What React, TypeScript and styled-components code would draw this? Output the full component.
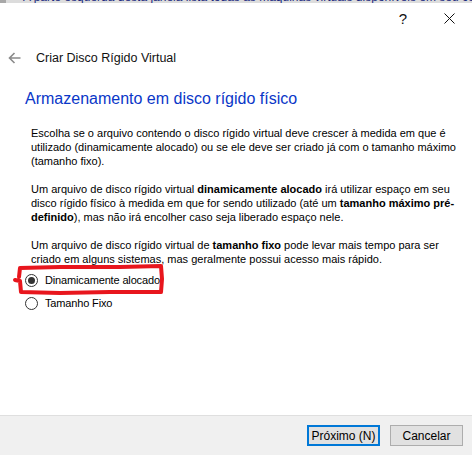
import React from "react";
import styled, { createGlobalStyle } from "styled-components";

const Global = createGlobalStyle`
  html, body { margin: 0; padding: 0; background: #ffffff; }
  body { width: 472px; height: 455px; overflow: hidden; }
  * { box-sizing: border-box; }
`;

const Window = styled.div`
  position: relative;
  width: 472px;
  height: 455px;
  display: flex;
  flex-direction: column;
  background: #ffffff;
  font-family: "Liberation Sans", Arial, sans-serif;
  color: #000000;
  overflow: hidden;
`;

const BackStrip = styled.div`
  height: 3px;
  background: #dcdcdc;
  display: flex;
  overflow: hidden;
  border-left: 6px solid #a8a8a8;
`;

const BackText = styled.div`
  margin-left: 17px;
  margin-top: -9px;
  font-size: 12px;
  line-height: 12px;
  color: #1b2a80;
  white-space: nowrap;
`;

const TitleBar = styled.div`
  height: 30px;
  display: flex;
  justify-content: flex-end;
  align-items: center;
`;

const TitleButton = styled.div<{ $w: number }>`
  width: ${(p) => p.$w}px;
  height: 30px;
  display: flex;
  align-items: center;
  justify-content: center;
  font-size: 15px;
  color: #111;
`;

const Header = styled.div`
  margin-top: 13px;
  height: 24px;
  display: flex;
  align-items: center;
  padding-left: 8px;
  gap: 15px;
`;

const HeaderTitle = styled.div`
  font-size: 12.5px;
  color: #111;
`;

const Content = styled.div`
  padding: 0 0 0 25px;
`;

const Heading = styled.h1`
  margin: 18px 0 0 0;
  font-weight: normal;
  font-size: 16px;
  line-height: 22px;
  color: #0a37c8;
  white-space: nowrap;
`;

const Body = styled.div`
  margin-top: 16px;
  padding-left: 6px;
  font-size: 11px;
  line-height: 14px;
  color: #000;
`;

const Para = styled.p`
  margin: 0 0 14px 0;
  white-space: nowrap;
  &:last-child { margin-bottom: 0; }
  b { font-weight: bold; }
`;

const Options = styled.div`
  margin-top: 7px;
  display: flex;
  flex-direction: column;
  gap: 9px;
`;

const Option = styled.label`
  display: flex;
  align-items: center;
  gap: 7px;
  font-size: 11px;
  letter-spacing: -0.15px;
  line-height: 14px;
  color: #000;
`;

const RadioCircle = styled.span<{ $checked: boolean }>`
  width: 13px;
  height: 13px;
  border-radius: 50%;
  border: 1px solid #333333;
  background: #fff;
  display: flex;
  align-items: center;
  justify-content: center;
  &::after {
    content: "";
    width: 7px;
    height: 7px;
    border-radius: 50%;
    background: ${(p) => (p.$checked ? "#333333" : "transparent")};
  }
`;

const Spacer = styled.div`
  flex: 1;
`;

const Footer = styled.div`
  height: 40px;
  background: #f0f0f0;
  border-top: 1px solid #dfdfdf;
  display: flex;
  justify-content: flex-end;
  align-items: flex-start;
  padding: 9px 9px 0 0;
  gap: 10px;
`;

const Button = styled.button<{ $default?: boolean }>`
  width: 73px;
  height: 21px;
  padding: 0;
  background: #e1e1e1;
  border: ${(p) => (p.$default ? "2px solid #0078d7" : "1px solid #adadad")};
  font-family: "Liberation Sans", Arial, sans-serif;
  font-size: 12px;
  color: #000;
`;

const Annotation = styled.svg`
  position: absolute;
  left: 0;
  top: 0;
  pointer-events: none;
`;

export default function App() {
  return (
    <>
      <Global />
      <Window>
        <BackStrip>
          <BackText>
            A parte esquerda desta janela lista todas as máquinas virtuais disponíveis em seu computador.
          </BackText>
        </BackStrip>
        <TitleBar>
          <TitleButton $w={46}>?</TitleButton>
          <TitleButton $w={46}>
            <svg width="11" height="11" viewBox="0 0 11 11">
              <path d="M0.5 0.5 L10.5 10.5 M10.5 0.5 L0.5 10.5" stroke="#111" strokeWidth="1" fill="none" />
            </svg>
          </TitleButton>
        </TitleBar>
        <Header>
          <svg width="13" height="12" viewBox="0 0 13 12">
            <path d="M12.5 6 H1.5 M6.5 1 L1.5 6 L6.5 11" stroke="#8a8a8a" strokeWidth="1.6" fill="none" />
          </svg>
          <HeaderTitle>Criar Disco Rígido Virtual</HeaderTitle>
        </Header>
        <Content>
          <Heading>Armazenamento em disco rígido físico</Heading>
          <Body>
            <Para>
              Escolha se o arquivo contendo o disco rígido virtual deve crescer à medida em que é
              <br />
              utilizado (dinamicamente alocado) ou se ele deve ser criado já com o tamanho máximo
              <br />
              (tamanho fixo).
            </Para>
            <Para>
              Um arquivo de disco rígido virtual <b>dinamicamente alocado</b> irá utilizar espaço em seu
              <br />
              disco rígido físico à medida em que for sendo utilizado (até um <b>tamanho máximo pré-</b>
              <br />
              <b>definido</b>), mas não irá encolher caso seja liberado espaço nele.
            </Para>
            <Para>
              Um arquivo de disco rígido virtual de <b>tamanho fixo</b> pode levar mais tempo para ser
              <br />
              criado em alguns sistemas, mas geralmente possui acesso mais rápido.
            </Para>
          </Body>
          <Options>
            <Option>
              <RadioCircle $checked={true} />
              Dinamicamente alocado
            </Option>
            <Option>
              <RadioCircle $checked={false} />
              Tamanho Fixo
            </Option>
          </Options>
        </Content>
        <Spacer />
        <Footer>
          <Button $default>Próximo (N)</Button>
          <Button>Cancelar</Button>
        </Footer>
        <Annotation width="472" height="455" viewBox="0 0 472 455">
          <path
            d="M20 268 L60 267 L120 267 L161 266 L162 279 L161 292 L110 292 L60 293 L21 292 L20 281 L15 280 M20 268 L19 277"
            stroke="#e8161d"
            strokeWidth="4"
            fill="none"
            strokeLinecap="round"
            strokeLinejoin="round"
          />
        </Annotation>
      </Window>
    </>
  );
}
